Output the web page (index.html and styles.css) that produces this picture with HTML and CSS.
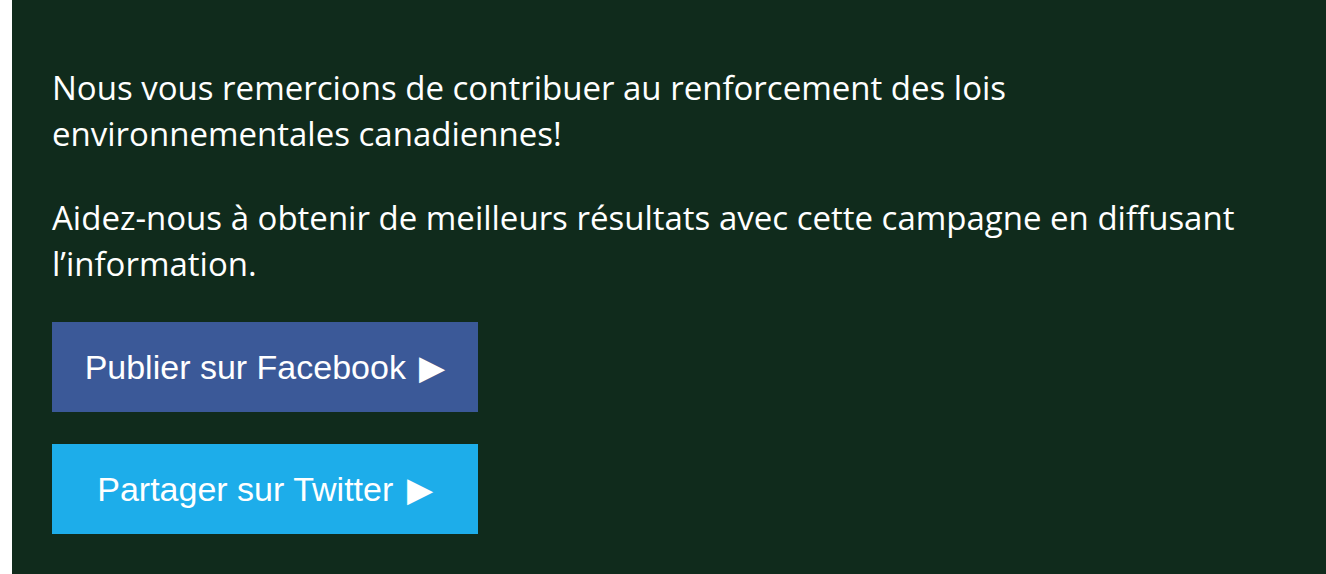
FILE: index.html
```html
<!DOCTYPE html>
<html lang="fr">
<head>
    <meta charset="UTF-8">
    <meta name="viewport" content="width=device-width, initial-scale=1.0">
    <title>Merci</title>
    <link rel="stylesheet" href="styles.css">
</head>
<body>
    <div class="panel">
        <p>Nous vous remercions de contribuer au renforcement des lois environnementales canadiennes!</p>
        <p>Aidez-nous à obtenir de meilleurs résultats avec cette campagne en diffusant l’information.</p>
        <div class="share">
            <a class="btn btn-facebook" href="#">Publier sur Facebook <span class="arrow">▶</span></a>
            <a class="btn btn-twitter" href="#">Partager sur Twitter <span class="arrow">▶</span></a>
        </div>
    </div>
</body>
</html>
```

FILE: styles.css
```css
body {
    margin: 0;
    background-color: white;
}
.panel {
    margin-left: 12px;
    min-height: 574px;
    box-sizing: border-box;
    padding: 65px 40px 40px 40px;
    background-color: #102b1c;
    color: white;
    font-family: "Open Sans", sans-serif;
    font-size: 33px;
    line-height: 46px;
}
.panel p {
    margin: 0;
    max-width: 1234px;
}
.panel p + p {
    margin-top: 38px;
}
.share {
    display: flex;
    flex-direction: column;
    align-items: flex-start;
    gap: 32px;
    margin-top: 35px;
}
.btn {
    display: flex;
    align-items: center;
    justify-content: center;
    width: 426px;
    height: 90px;
    color: white;
    text-decoration: none;
    font-family: "Liberation Sans", Arial, sans-serif;
    font-size: 34px;
    line-height: 1;
    white-space: pre;
}
.btn .arrow {
    margin-left: 4px;
}
.btn-facebook {
    background-color: #3b5998;
}
.btn-twitter {
    background-color: #1dadea;
}
```
